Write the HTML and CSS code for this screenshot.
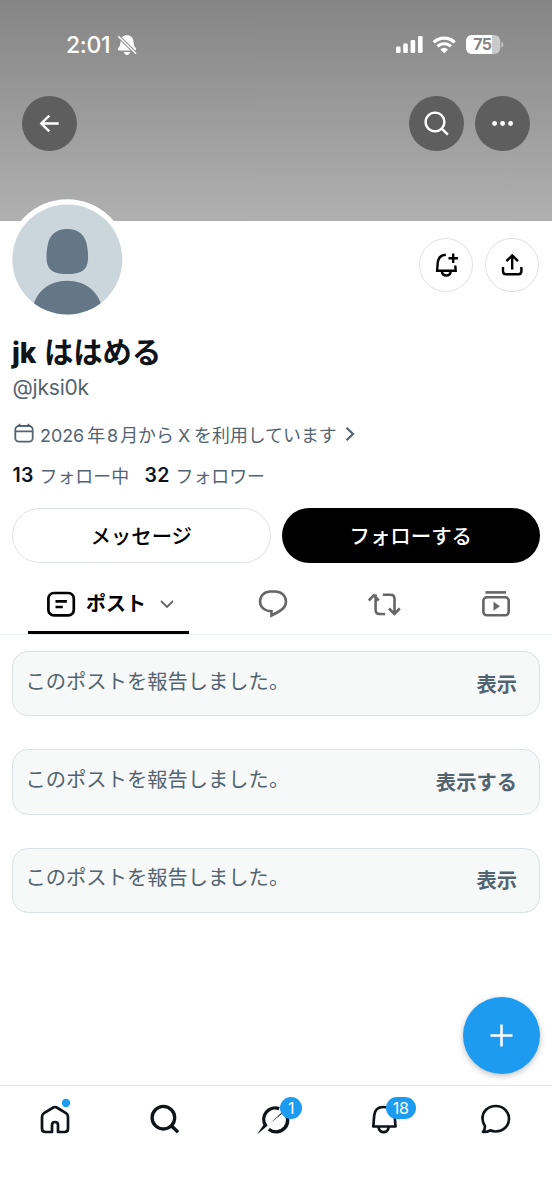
FILE: index.html
```html
<!DOCTYPE html>
<html lang="ja">
<head>
<meta charset="utf-8">
<title>jkははめる (@jksi0k)</title>
<link rel="stylesheet" href="styles.css">
</head>
<body>
<div class="app">
  <header class="banner">
    <div class="status">
      <div class="clock">2:01</div>
      <svg class="silent" width="22" height="24" viewBox="116 33 22 24">
        <path fill="#fff" d="M127 35.3c-3.800 0-6.200 2.600-6.400 6-.2 3.700-.8 5-2.300 6.800-.8 1-.4 2.400.9 2.400h15.600c1.300 0 1.700-1.400.9-2.400-1.500-1.800-2.100-3.100-2.300-6.800-.2-3.400-2.600-6-6.400-6zM123.800 52h6.400c-.4 1.800-1.600 2.900-3.200 2.900s-2.800-1.100-3.200-2.900z"/>
        <path stroke="#929292" stroke-width="3.600" d="M117 35l19.500 19"/>
        <path stroke="#fff" stroke-width="1.500" stroke-linecap="round" d="M118.800 36.800l16.800 16.400"/>
      </svg>
      <svg class="signals" width="110" height="24" viewBox="394 33 110 24">
        <g fill="#fff">
          <rect x="396" y="46.500" width="4.600" height="6.500" rx="1.300"/>
          <rect x="403.200" y="43.500" width="4.600" height="9.500" rx="1.300"/>
          <rect x="410.600" y="40" width="4.600" height="13" rx="1.300"/>
          <rect x="418" y="36" width="4.600" height="17" rx="1.300"/>
          <path d="M444.200 53.300l-3.900-3.900a5.700 5.700 0 0 1 7.800 0z"/>
        </g>
        <g fill="none" stroke="#fff" stroke-width="3.100">
          <path d="M433.700 42.300a15.200 15.200 0 0 1 21 0M437.500 46.500a9.500 9.500 0 0 1 13.400 0"/>
        </g>
        <rect x="466" y="35" width="34.300" height="19" rx="6" fill="#c9c9c9"/>
        <path fill="#fff" d="M472 35h20v19h-20a6 6 0 0 1-6-6v-7a6 6 0 0 1 6-6z"/>
        <path fill="#c9c9c9" d="M501.500 41.500c2.300.8 2.300 5.200 0 6z"/>
        <text class="charge" x="473.300" y="50.300">75</text>
      </svg>
    </div>
    <nav class="topnav">
      <button class="round dark" aria-label="戻る">
        <svg width="55" height="55" viewBox="22 96 55 55" class="line white"><path d="M58.700 123.500H41M49.300 115.700l-8 7.800 8 7.800"/></svg>
      </button>
      <span class="grow"></span>
      <button class="round dark" aria-label="検索">
        <svg width="55" height="55" viewBox="409 96 55 55" class="line white"><circle cx="435" cy="122" r="9.400"/><path d="M441.700 128.700l6.200 6"/></svg>
      </button>
      <button class="round dark" aria-label="その他">
        <svg width="55" height="55" viewBox="475 96 55 55" fill="#fff"><circle cx="494.600" cy="123.500" r="2.400"/><circle cx="502.600" cy="123.500" r="2.400"/><circle cx="510.600" cy="123.500" r="2.400"/></svg>
      </button>
    </nav>
  </header>

  <section class="profile">
    <div class="identity">
      <svg class="avatar" width="120" height="121" viewBox="7 199 120 121">
        <defs><clipPath id="face"><circle cx="67.300" cy="259.500" r="55"/></clipPath></defs>
        <circle cx="67.300" cy="259.500" r="60.300" fill="#fff"/>
        <circle cx="67.300" cy="259.500" r="55" fill="#cbd6dc"/>
        <g clip-path="url(#face)" fill="#657687">
          <path d="M67.300 229c-11.500 0-17.500 6-19.500 15.500-1.400 7-1.700 14.500-.6 19 1.900 8 8.500 10.500 20.100 10.500s18.200-2.500 20.100-10.500c1.100-4.500.8-12-.6-19-2-9.500-8-15.500-19.500-15.500z"/>
          <path d="M33 307c3-15 16-26.200 34.300-26.200S98.600 292 101.600 307v12H33z"/>
        </g>
      </svg>
      <span class="grow"></span>
      <button class="round light" aria-label="通知">
        <svg width="54" height="54" viewBox="419 238 54 54" class="line ink"><path d="M445.800 254.700c-5.300.2-7.700 3.800-8.100 8.300l-.6 7.800h18.600l-.4-5.300M441.800 271.300c.4 2.700 2.100 4.200 4.500 4.200s4.100-1.500 4.500-4.200M453.200 253.500v9.500M448.500 258.200h9.400"/></svg>
      </button>
      <button class="round light" aria-label="共有">
        <svg width="54" height="54" viewBox="485 238 54 54" class="line ink"><path d="M512.200 269.500v-14M506.400 261.200l5.800-5.800 5.800 5.800M503 267v4.300c0 2 1 3 3 3h12.400c2 0 3-1 3-3V267"/></svg>
      </button>
    </div>
    <h1 class="name"><span class="latin">jk</span>ははめる</h1>
    <div class="handle">@jksi0k</div>
    <div class="joined">
      <svg width="27" height="26" viewBox="13 422 27 26" class="calendar"><rect x="15.300" y="427" width="17.400" height="15.600" rx="3.500"/><path d="M15.300 432.300h17.400M19.500 424.800v2.200M28.500 424.800v2.200"/></svg>
      <span class="since"><span class="year">2026</span>年<span class="month">8</span>月から<span class="x">X</span>を利用しています</span>
      <svg width="12" height="18" viewBox="344 426 12 18" class="chevron"><path d="M346.500 428.700l6.500 6.300-6.500 6.300"/></svg>
    </div>
    <div class="counts"><b>13</b><span class="first">フォロー中</span><b>32</b><span>フォロワー</span></div>
    <div class="actions">
      <button class="pill outline">メッセージ</button>
      <button class="pill solid">フォローする</button>
    </div>
  </section>

  <nav class="tabs">
    <div class="tab active">
      <svg width="30" height="28" viewBox="46 590 30 28" class="line ink thick"><rect x="48.400" y="593" width="25.400" height="22.400" rx="5.500"/><path d="M55.500 601.400h11.400M55.500 607h7.300"/></svg>
      <span class="label">ポスト</span>
      <svg width="16" height="10" viewBox="159 600 16 10" class="chevron soft"><path d="M161 602l6 6 6-6"/></svg>
    </div>
    <div class="tab">
      <svg width="36" height="34" viewBox="255 587 36 34" class="line gray"><path d="M270.500 591.500h4.500c6.500 0 11 4.300 11 10 0 4.700-2.500 7.500-7 10l-7.500 4v-4.200c-7-.2-11.500-4.300-11.500-9.800 0-5.700 4.500-10 10.500-10z"/></svg>
    </div>
    <div class="tab">
      <svg width="36" height="34" viewBox="366.500 587 36 34" class="line gray"><path d="M386 614h-5.500c-2.500 0-4-1.500-4-4v-15.500M369.700 600.500l5-5.200 5 5.200" transform="translate(-.4 0)"/><path d="M383.300 594.700h7.700c2.500 0 4 1.500 4 4v15M389.500 608.500l5.400 5.400 5.400-5.400"/></svg>
    </div>
    <div class="tab">
      <svg width="36" height="34" viewBox="478 587 36 34" class="line gray"><path d="M485.500 592.400h20.500"/><rect x="483.400" y="597.300" width="25.300" height="18" rx="3.500"/><path class="fill" d="M493.500 601.800l6.500 4.500-6.500 4.500z"/></svg>
    </div>
  </nav>

  <main class="posts">
    <div class="card"><span>このポストを報告しました。</span><b>表示</b></div>
    <div class="card"><span>このポストを報告しました。</span><b>表示する</b></div>
    <div class="card"><span>このポストを報告しました。</span><b>表示</b></div>
  </main>

  <button class="fab" aria-label="ポストする">
    <svg width="77" height="77" viewBox="0 0 77 77"><path stroke="#fff" stroke-width="2.500" d="M38.500 27.500v22M27.500 38.500h22"/></svg>
  </button>

  <nav class="bottom">
    <div class="item">
      <svg width="46" height="46" viewBox="32 1096 46 46" class="line black"><path d="M53.300 1107.500q1.700-1 3.400 0l9.300 5.700q2 1.300 2 3.800v11.500q0 3.500-3.500 3.500H58v-7q0-3-3-3t-3 3v7h-6.500q-3.500 0-3.500-3.500V1117q0-2.500 2-3.800z"/><circle class="dot" cx="66" cy="1103" r="4.200"/></svg>
    </div>
    <div class="item">
      <svg width="46" height="46" viewBox="142.900 1096 46 46" class="line black heavy"><circle cx="163.300" cy="1117.700" r="11.300"/><path d="M171.500 1126l6.500 6.300"/></svg>
    </div>
    <div class="item">
      <svg width="46" height="46" viewBox="253.500 1096 46 46"><path fill="none" stroke="#0f1419" stroke-width="3.400" d="M266.200 1125.800a11.500 11.500 0 0 1 13.500-17.200M284 1111.500a11.500 11.500 0 0 1-14.700 17.700"/><path fill="#0f1419" d="M257.500 1134.500l7.700-11.500 3 2.500zM270.500 1123.500l13.500-12.800-1.800 3.400z"/></svg>
      <span class="badge one">1</span>
    </div>
    <div class="item">
      <svg width="46" height="46" viewBox="363.900 1096 46 46" class="line black"><path d="M384.500 1107c-5.800 0-9 3.500-9.400 8.500l-.9 11h22.200l-.9-11c-.4-5-3.900-8.500-11-8.500zM379.500 1127.500c.5 3 2.500 4.700 5 4.700s4.500-1.700 5-4.700"/></svg>
      <span class="badge two">18</span>
    </div>
    <div class="item">
      <svg width="46" height="46" viewBox="474 1096 46 46" class="line black"><path d="M495.700 1106c-7.500 0-13.200 5.400-13.200 12.600 0 3.500 1.400 6 2.500 7.700 0 2.500-.5 4.100-2 5.600 2.700.3 5.200-.3 7.200-1.600 1.700.8 3.500 1.200 5.500 1.200 7.500 0 13.300-5.600 13.300-12.800S503.200 1106 495.700 1106z"/></svg>
    </div>
  </nav>
</div>
</body>
</html>
```
FILE: styles.css
```css
* { box-sizing: border-box; }
body { margin: 0; background: #fff; font-family: Inter, "Noto Sans CJK JP", sans-serif; color: #0f1419; text-autospace: no-autospace; }
button { border: 0; padding: 0; margin: 0; font: inherit; }
svg { display: block; flex: none; }
.app { position: relative; width: 552px; height: 1200px; overflow: hidden; display: flex; flex-direction: column; }
.grow { flex: 1; }

.banner { height: 221px; flex: none; background: linear-gradient(#858585, #b0b0b0); }
.status { height: 96px; padding: 33px 48px 0 66px; display: flex; align-items: flex-start; color: #fff; }
.clock { width: 50px; line-height: 24px; font-size: 23px; font-weight: 500; letter-spacing: -0.300px; white-space: nowrap; }
.signals { margin-left: auto; }
.charge { font: 700 16px Inter, sans-serif; fill: #858585; letter-spacing: -0.700px; }
.topnav { display: flex; gap: 11px; padding: 0 22px; }
.topnav .grow { margin-right: -11px; }
.round { width: 55px; height: 55px; border-radius: 50%; flex: none; display: flex; }
.dark { background: #5e5e5e; }
.light { width: 54px; height: 54px; background: #fff; box-shadow: inset 0 0 0 1px #dfe2e4; }

.line { fill: none; stroke-width: 2.400; }
.white { stroke: #fff; }
.ink { stroke: #000; }
.gray { stroke: #666; stroke-width: 2.600; }
.gray .fill { fill: #666; stroke: none; }
.thick { stroke-width: 2.700; }
.black { stroke: #0f1419; stroke-width: 2.700; stroke-linejoin: round; }
.heavy { stroke-width: 3.300; }
.dot { fill: #1d9bf0; stroke: none; }
.chevron { fill: none; stroke: #536471; stroke-width: 2.200; }
.soft { stroke: #666; stroke-width: 1.800; }
.calendar { fill: none; stroke: #536471; stroke-width: 1.800; }

.profile { height: 354px; flex: none; padding: 0 12px; }
.identity { height: 113px; display: flex; padding: 17px 1px 0 0; gap: 12px; }
.avatar { margin: -39px 0 0 -5px; position: relative; }
.name { margin: 0; height: 37px; line-height: 38px; font-size: 29.300px; font-weight: 700; white-space: nowrap; }
.name .latin { margin-right: 9px; font-size: 28px; font-weight: 800; letter-spacing: -0.300px; }
.name .latin { display: inline-block; width: 32px; margin-right: 0; }
.handle { height: 34px; line-height: 34px; font-size: 21px; color: #536471; letter-spacing: -0.200px; padding-left: 0.500px; }
.joined { height: 58px; display: flex; align-items: center; padding-left: 1px; font-size: 17.900px; color: #536471; white-space: nowrap; }
.since { padding-bottom: 1px; }
.joined .chevron { margin-left: 7px; }
.year { margin-right: 3px; }
.month { margin: 0 2px; }
.x { margin: 0 4px; }
.counts { height: 24px; display: flex; align-items: center; font-size: 17.900px; color: #536471; white-space: nowrap; }
.counts b { color: #0f1419; font-weight: 600; font-size: 19.500px; letter-spacing: 0.200px; margin-right: 6px; padding-left: 0.500px; }
.counts span { padding-bottom: 1px; }
.first { margin-right: 15px; }
.actions { display: grid; grid-template-columns: 1fr 1fr; gap: 11px; margin-top: 21px; }
.pill { height: 55px; border-radius: 28px; font-size: 20.400px; font-weight: 500; display: flex; align-items: center; justify-content: center; padding-bottom: 2px; }
.outline { background: #fff; color: #000; border: 1px solid #dfe2e4; }
.solid { background: #000; color: #fff; }

.tabs { height: 60px; flex: none; display: flex; border-bottom: 1px solid #eceff1; padding-left: 28px; }
.tab { width: 111.500px; display: flex; align-items: center; justify-content: center; padding-bottom: 1px; }
.tab.active { width: 161px; margin-right: 28px; justify-content: flex-start; padding-left: 18px; background: linear-gradient(#000, #000) bottom / 100% 3px no-repeat; }
.label { font-size: 20px; font-weight: 700; color: #000; margin: 0 13px 0 10px; line-height: 28px; white-space: nowrap; }

.posts { padding: 16px 12px 0; display: flex; flex-direction: column; gap: 33px; }
.card { height: 65.400px; border: 1px solid #dbe1e5; border-radius: 16px; background: #f7f9f9; display: flex; justify-content: space-between; align-items: center; padding: 0 22px 0 12.500px; font-size: 20.300px; color: #536471; white-space: nowrap; }
.card span { padding-bottom: 8px; }
.card b { font-weight: 700; padding-bottom: 2px; }

.fab { position: absolute; left: 462.500px; top: 996.500px; width: 77px; height: 77px; border-radius: 50%; background: #1d9bf0; box-shadow: 0 2px 6px rgba(0, 0, 0, .25); }
.bottom { margin-top: auto; height: 115px; flex: none; border-top: 1px solid #e1e6e8; display: grid; grid-template-columns: repeat(5, 1fr); padding-top: 10px; }
.item { position: relative; display: flex; justify-content: center; align-items: flex-start; }
.badge { position: absolute; top: 1px; height: 22px; line-height: 22px; border-radius: 11px; background: #1d9bf0; color: #fff; font-size: 16px; text-align: center; }
.one { left: 59.500px; width: 22px; }
.two { left: 54.500px; width: 30px; letter-spacing: -0.300px; }
```
